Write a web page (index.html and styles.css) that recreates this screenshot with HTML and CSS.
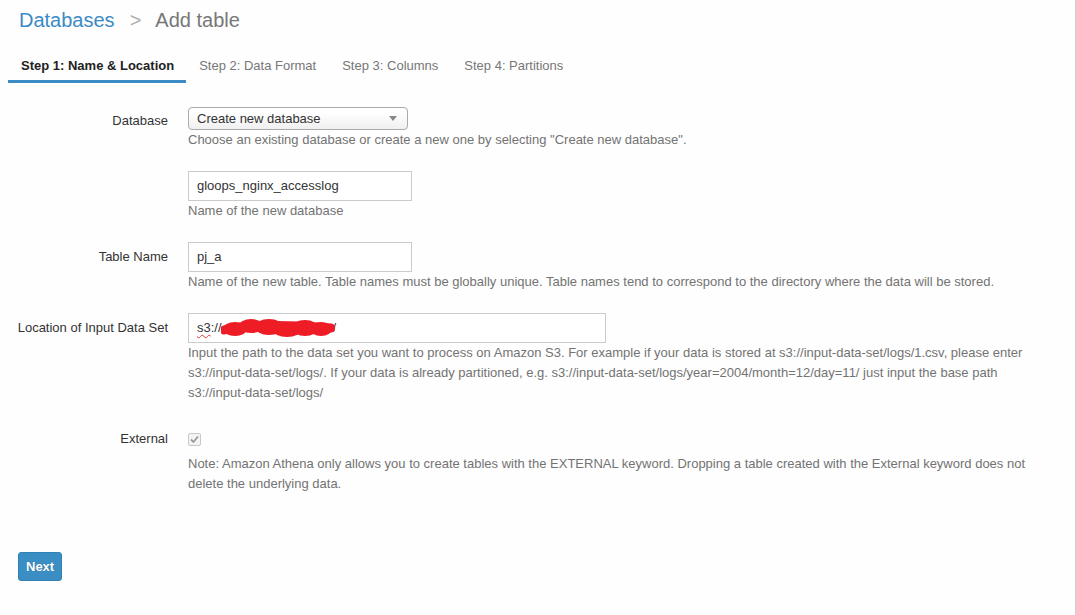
FILE: index.html
```html
<!DOCTYPE html>
<html lang="en">
<head>
<meta charset="utf-8">
<title>Add table</title>
<link rel="stylesheet" href="styles.css">
</head>
<body>
<div class="page">
  <div class="crumbs">
    <a class="crumb-link" href="#">Databases</a>
    <span class="crumb-sep">&gt;</span>
    <span class="crumb-current">Add table</span>
  </div>

  <nav class="tabs">
    <span class="tab active">Step 1: Name &amp; Location</span>
    <span class="tab">Step 2: Data Format</span>
    <span class="tab">Step 3: Columns</span>
    <span class="tab">Step 4: Partitions</span>
  </nav>

  <form class="form">
    <div class="row first">
      <label class="label label-select">Database</label>
      <div class="field">
        <div class="select">
          <span>Create new database</span>
          <span class="caret"></span>
        </div>
        <p class="help">Choose an existing database or create a new one by selecting "Create new database".</p>
      </div>
    </div>

    <div class="row">
      <div class="label"></div>
      <div class="field">
        <div class="input w224">gloops_nginx_accesslog</div>
        <p class="help">Name of the new database</p>
      </div>
    </div>

    <div class="row">
      <label class="label">Table Name</label>
      <div class="field">
        <div class="input w224">pj_a</div>
        <p class="help">Name of the new table. Table names must be globally unique. Table names tend to correspond to the directory where the data will be stored.</p>
      </div>
    </div>

    <div class="row">
      <label class="label">Location of Input Data Set</label>
      <div class="field">
        <div class="input w418 loc"><span class="spell">s3</span>://<span class="redact-box"><svg class="redact" width="114" height="24" viewBox="0 0 114 24">
            <ellipse cx="14" cy="13" rx="12" ry="7" fill="#ee1c25"/>
            <ellipse cx="30" cy="10" rx="12" ry="7" fill="#ee1c25"/>
            <ellipse cx="48" cy="11" rx="14" ry="8" fill="#ee1c25"/>
            <ellipse cx="66" cy="14" rx="14" ry="7" fill="#ee1c25"/>
            <ellipse cx="84" cy="12" rx="13" ry="8" fill="#ee1c25"/>
            <ellipse cx="100" cy="13" rx="11" ry="7" fill="#ee1c25"/>
            <path d="M3 14 C20 9 60 8 110 12" stroke="#ee1c25" stroke-width="9" fill="none" stroke-linecap="round"/>
          </svg></span>/</div>
        <p class="help">Input the path to the data set you want to process on Amazon S3. For example if your data is stored at s3://input-data-set/logs/1.csv, please enter s3://input-data-set/logs/. If your data is already partitioned, e.g. s3://input-data-set/logs/year=2004/month=12/day=11/ just input the base path s3://input-data-set/logs/</p>
      </div>
    </div>

    <div class="row">
      <label class="label">External</label>
      <div class="field">
        <div class="check-wrap">
          <span class="checkbox">
            <svg width="11" height="11" viewBox="0 0 11 11"><path d="M2 5.5 L4.5 8 L9 2.5" stroke="#9a9a9a" stroke-width="1.8" fill="none"/></svg>
          </span>
        </div>
        <p class="help">Note: Amazon Athena only allows you to create tables with the EXTERNAL keyword. Dropping a table created with the External keyword does not delete the underlying data.</p>
      </div>
    </div>

    <div class="actions">
      <button type="button" class="btn">Next</button>
    </div>
  </form>
</div>
</body>
</html>
```

FILE: styles.css
```css
* { box-sizing: border-box; }
html, body { margin: 0; padding: 0; }
body {
  font-family: "Liberation Sans", Arial, sans-serif;
  font-size: 13px;
  color: #333;
  background: #fff;
}
.page {
  width: 1076px;
  min-height: 615px;
  border-right: 1px solid #cfcfcf;
  background: #fefefe;
  padding: 0 20px 0 8px;
}
.crumbs {
  padding: 8px 0 0 11px;
  font-size: 20px;
  line-height: 24px;
  display: flex;
}
.crumb-link { color: #3b8bc5; text-decoration: none; }
.crumb-sep { color: #b0b0b0; margin: 0 14px 0 15px; }
.crumb-current { color: #777; }

.tabs {
  margin-top: 16px;
  display: flex;
}
.tab {
  padding: 9px 13px 5px 13px;
  line-height: 18px;
  color: #777;
  border-bottom: 3px solid transparent;
}
.tab.active {
  color: #222;
  font-weight: bold;
  border-bottom-color: #3b8bc5;
  padding-right: 12px;
}

.form { padding-top: 24px; }
.row {
  display: grid;
  grid-template-columns: 160px 1fr;
  column-gap: 20px;
  margin-bottom: 21px;
}
.label {
  text-align: right;
  line-height: 30px;
  color: #333;
}
.label-select { line-height: 23px; padding-top: 2px; }
.field { min-width: 0; }
.help {
  margin: 0;
  line-height: 20px;
  color: #737373;
}
.select {
  width: 220px;
  height: 23px;
  border: 1px solid #aaa;
  border-radius: 4px;
  background: linear-gradient(#ffffff 20%, #f0f0f0 100%);
  padding: 0 9px 0 8px;
  display: flex;
  align-items: center;
  justify-content: space-between;
  line-height: 21px;
  color: #333;
}
.caret {
  width: 0; height: 0;
  border-left: 4px solid transparent;
  border-right: 4px solid transparent;
  border-top: 5px solid #888;
  margin-right: 1px;
}
.input {
  height: 30px;
  border: 1px solid #cbcbcb;
  background: #fff;
  padding: 0 8px;
  line-height: 28px;
  color: #333;
  white-space: nowrap;
}
.w224 { width: 224px; }
.w418 { width: 418px; }
.spell {
  text-decoration: underline wavy #e33;
  text-decoration-thickness: 1px;
  text-underline-offset: 2px;
}
.redact-box {
  display: inline-block;
  position: relative;
  width: 111px;
  height: 20px;
  vertical-align: middle;
}
.redact {
  position: absolute;
  left: -1px;
  top: -3px;
}
.check-wrap {
  height: 30px;
  display: flex;
  align-items: center;
}
.checkbox {
  width: 13px;
  height: 13px;
  border: 1px solid #c8c8c8;
  border-radius: 2px;
  background: #f4f4f4;
  display: flex;
  align-items: center;
  justify-content: center;
}
.actions { padding: 37px 0 0 10px; }
.btn {
  font-family: "Liberation Sans", Arial, sans-serif;
  font-size: 13px;
  font-weight: bold;
  color: #fff;
  background: #3b8ec4;
  border: 1px solid #3180b6;
  border-radius: 3px;
  height: 29px;
  padding: 0 7px;
  text-shadow: 0 0 1px rgba(0,0,0,0.3);
  cursor: pointer;
}
```
